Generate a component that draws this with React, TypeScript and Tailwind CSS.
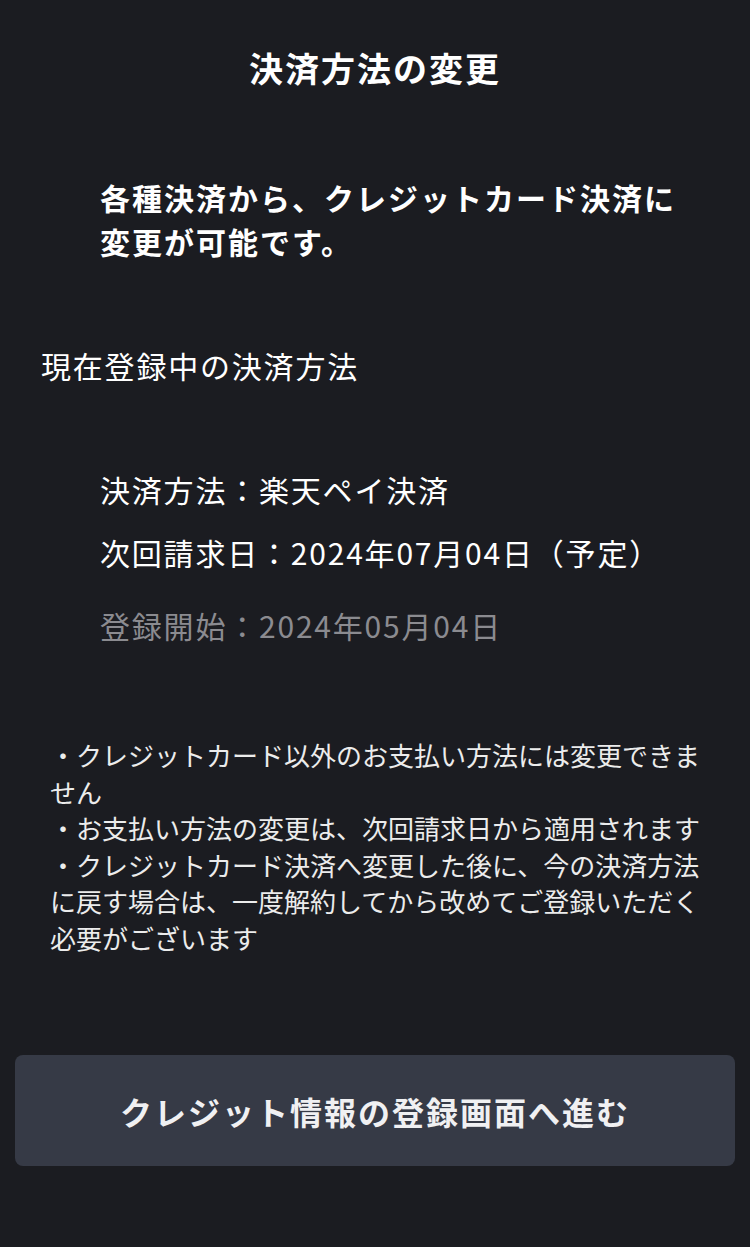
import React from "react";

const notes = [
  "・クレジットカード以外のお支払い方法には変更できません",
  "・お支払い方法の変更は、次回請求日から適用されます",
  "・クレジットカード決済へ変更した後に、今の決済方法に戻す場合は、一度解約してから改めてご登録いただく必要がございます",
];

const App = () => {
  return (
    <div className="min-h-[1247px] bg-[#1b1c21] text-white font-['Noto_Sans_CJK_JP','Noto_Sans',sans-serif]">
      {/* header */}
      <h1 className="pt-[42px] text-center text-[34px] leading-[51px] font-bold tracking-[2px]">決済方法の変更</h1>

      {/* lead text */}
      <p className="mt-[82px] pl-[100px] pr-[60px] text-[30px] leading-[44px] font-bold tracking-[2px]">
        各種決済から、クレジットカード決済に変更が可能です。
      </p>

      {/* current payment */}
      <h2 className="mt-[80px] px-[41px] text-[30px] leading-[44px] tracking-[1.8px]">現在登録中の決済方法</h2>
      <div className="mt-[80px] px-[100px] text-[30px] leading-[44px] tracking-[1.8px]">
        <p>決済方法：楽天ペイ決済</p>
        <p className="mt-[19px]">次回請求日：2024年07月04日（予定）</p>
        <p className="mt-[29px] text-[#8b8b90]">登録開始：2024年05月04日</p>
      </div>

      {/* notes */}
      <ul className="mt-[90px] pl-[50px] w-[705px] text-[26px] leading-[36.5px] text-[#ececec]">
        {notes.map((n) => (
          <li key={n}>{n}</li>
        ))}
      </ul>

      {/* action */}
      <div className="mt-[99px] px-[15px]">
        <button className="w-full h-[111px] rounded-lg bg-[#363a46] text-[32px] font-bold tracking-[2px] text-[#f0f0f2]">
          クレジット情報の登録画面へ進む
        </button>
      </div>
    </div>
  );
};

export default App;
